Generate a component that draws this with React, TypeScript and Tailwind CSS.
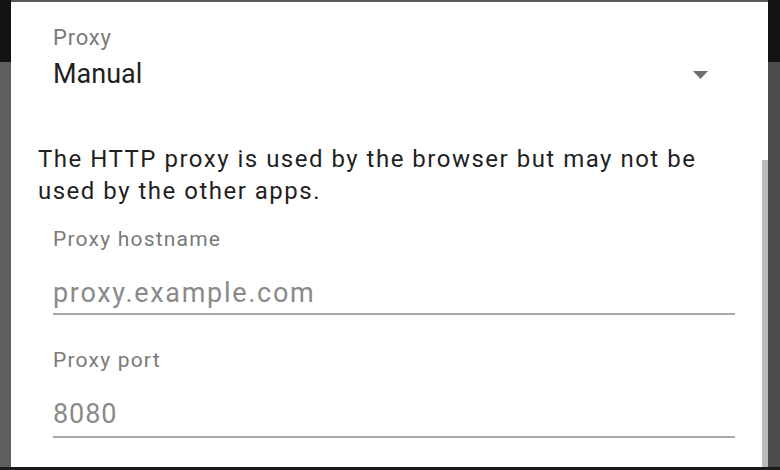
import React from "react";

function Field({
  label,
  value,
  valueClass,
}: {
  label: string;
  value: string;
  valueClass: string;
}) {
  return (
    <div className="flex flex-col">
      <div className="text-[21px] leading-[26px] text-[#7a7a7a] tracking-[1.2px]">{label}</div>
      <div
        className={
          "mt-[26px] text-[27px] leading-[30px] text-[#8a8a8a] border-b-2 border-[#a8a8a8] mr-[33px] " +
          valueClass
        }
      >
        {value}
      </div>
    </div>
  );
}

export default function App() {
  return (
    <div
      className="w-[780px] h-[470px] flex flex-col bg-[#222]"
      style={{ fontFamily: "Roboto, 'Noto Sans', sans-serif" }}
    >
      <div className="flex flex-1">
        <div className="w-[11px] flex flex-col">
          <div className="h-[62px] bg-[#111313]" />
          <div className="flex-1 bg-[#5e5e5e]" />
        </div>
        <div className="flex-1 flex flex-col">
          <div className="h-[2px] bg-[#5a5a5a]" />
          <div className="flex-1 bg-white relative pt-[23px]">
            <div className="absolute right-0 top-[158px] bottom-0 w-[6px] bg-[#bcbcbc]" />
            <div className="pl-[42px] flex flex-col">
              <div className="text-[22px] leading-[26px] text-[#7a7a7a] tracking-[0.8px]">Proxy</div>
              <div className="mt-[8px] flex items-center justify-between pr-[60px]">
                <span className="text-[27px] leading-[30px] text-[#1f1f1f]">Manual</span>
                <svg width="15" height="8" viewBox="0 0 15 8" className="mt-[1px]">
                  <polygon points="0,0 15,0 7.5,8" fill="#6e6e6e" />
                </svg>
              </div>
            </div>
            <div className="pl-[27px] mt-[54px] text-[24px] leading-[32px] text-[#1f1f1f] tracking-[1.5px]">
              The HTTP proxy is used by the browser but may not be
              <br />
              used by the other apps.
            </div>
            <div className="pl-[42px] mt-[19px]">
              <Field label="Proxy hostname" value="proxy.example.com" valueClass="tracking-[1.7px] pb-[5px]" />
            </div>
            <div className="pl-[42px] mt-[32px]">
              <Field label="Proxy port" value="8080" valueClass="tracking-[0.9px] pb-[7px]" />
            </div>
          </div>
        </div>
        <div className="w-[12px] flex flex-col">
          <div className="h-[62px] bg-[#111313]" />
          <div className="flex-1 bg-[#4c4c4c]" />
        </div>
      </div>
      <div className="h-[3px] bg-[#1a1a1a]" />
    </div>
  );
}
